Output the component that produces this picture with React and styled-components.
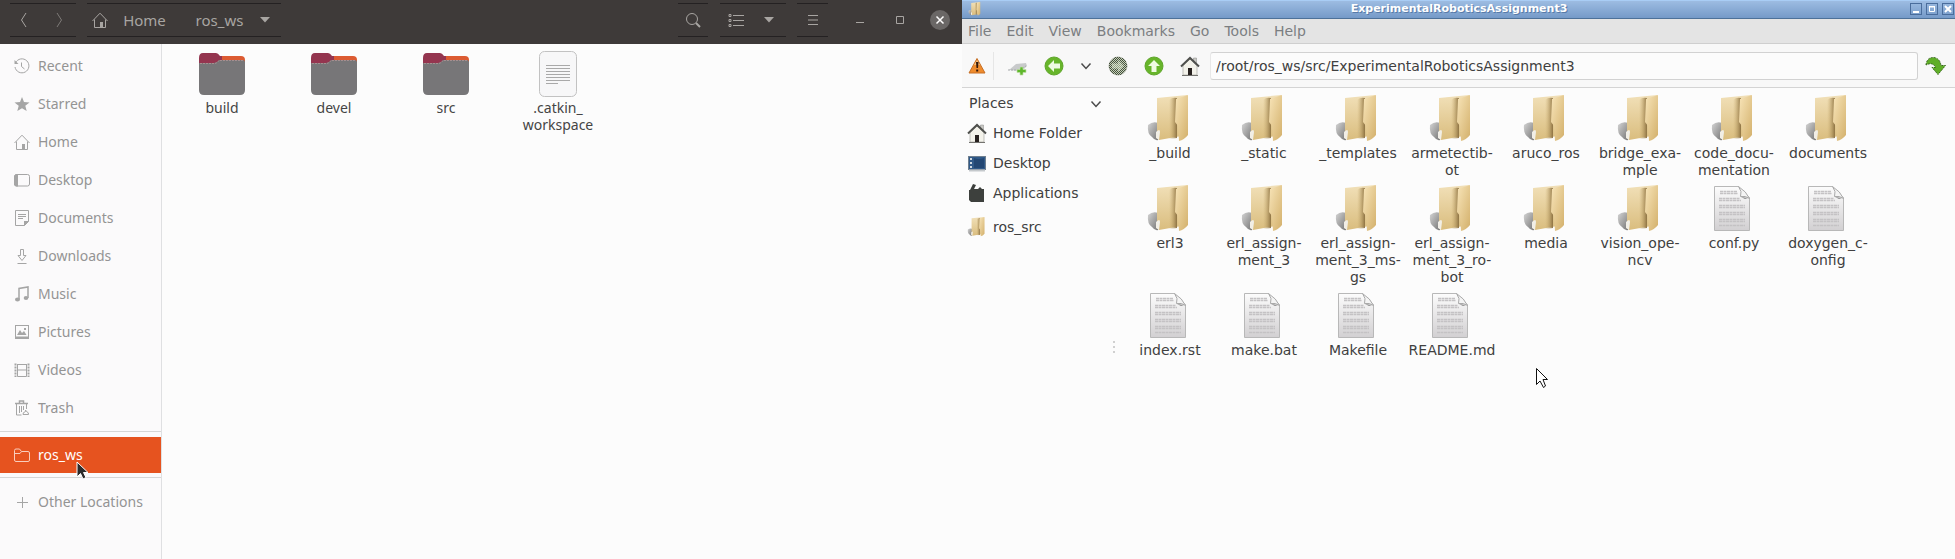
import React from "react";
import styled, { createGlobalStyle, css } from "styled-components";

const Global = createGlobalStyle`
  * { box-sizing: border-box; }
  body { margin: 0; background: #fcfcfc; }
  button { border: 0; padding: 0; margin: 0; background: none; font: inherit; color: inherit; }
  ul { list-style: none; margin: 0; padding: 0; }
  svg { display: block; flex: none; }
`;

const Desktop = styled.div`
  display: flex;
  min-height: 100vh;
`;

/* ---------- Nautilus window ---------- */

const Nautilus = styled.section`
  flex: 962 1 0;
  min-width: 0;
  display: flex;
  flex-direction: column;
  font: 14px/17px "Noto Sans", "Open Sans", sans-serif;
  color: #454545;
`;

const HeaderBar = styled.header`
  display: flex;
  align-items: center;
  height: 44px;
  padding: 0 12px 4px 10px;
  background: #3e3a39;
  color: #a8a5a2;
  font-size: 15px;
`;

const ButtonGroup = styled.div`
  display: flex;
  align-items: center;
  height: 34px;
  margin-right: ${(p) => p.$after || 0}px;
  border-top: 1px solid #242122;
  border-bottom: 1px solid #242122;
`;

const HeaderButton = styled.button`
  display: flex;
  align-items: center;
  justify-content: center;
  gap: ${(p) => p.$gap || 0}px;
  width: ${(p) => p.$width}px;
  height: 32px;
  opacity: ${(p) => (p.$dim ? 0.6 : 1)};
`;

const CrumbButton = styled(HeaderButton)`
  padding-left: 14px;
`;

const Spacer = styled.div`
  flex: 1;
`;

const CloseButton = styled.button`
  display: flex;
  align-items: center;
  justify-content: center;
  width: 20px;
  height: 20px;
  margin-left: 10px;
  border-radius: 50%;
  background: #6a6766;
  color: #fff;
`;

const NautilusBody = styled.div`
  flex: 1;
  display: flex;
`;

const SideBar = styled.nav`
  width: 162px;
  padding-top: 3px;
  border-right: 1px solid #dfe0e2;
  background: #fbfafb;
`;

const SideLink = styled.a`
  display: flex;
  align-items: center;
  gap: 8px;
  height: 38px;
  padding-left: 14px;
  color: #949494;
  text-decoration: none;
  white-space: nowrap;
  svg { color: #a5a5a5; }
  ${(p) =>
    p.$active &&
    css`
      height: 36px;
      background: #e6531f;
      color: #fff;
      svg { color: #f9cdbc; }
    `}
`;

const SideLabel = styled.span`
  padding-bottom: 2px;
`;

const Rule = styled.hr`
  margin: 4px 0 5px;
  border: 0;
  border-top: 1px solid #d6d6d6;
`;

const NautilusFiles = styled.ul`
  flex: 1;
  display: flex;
  align-items: flex-start;
  padding: 7px 0 0 4px;
`;

const NautilusFile = styled.li`
  display: flex;
  flex-direction: column;
  align-items: center;
  width: 112px;
  text-align: center;
`;

/* ---------- PCManFM window ---------- */

const PcManFm = styled.section`
  flex: 993 1 0;
  min-width: 0;
  display: flex;
  flex-direction: column;
  background: #fcfcfc;
  font: 14px/17px "DejaVu Sans", sans-serif;
  color: #404040;
`;

const TitleBar = styled.header`
  display: flex;
  align-items: center;
  height: 19px;
  padding: 0 1px 2px 6px;
  border-top: 1px solid #a9cdf5;
  border-bottom: 1px solid #4d7199;
  background: linear-gradient(#9dbce2, #759ac8);
`;

const Title = styled.h1`
  flex: 1;
  margin: 0;
  padding-left: 26px;
  font-size: 11px;
  line-height: 13px;
  text-align: center;
  color: #fff;
  text-shadow: 1px 1px 0 #587ba8;
`;

const TitleButtons = styled.div`
  display: flex;
  gap: 4px;
`;

const TitleButton = styled.button`
  width: 12px;
  height: 12px;
  border: 1px solid #4a6d9c;
  color: #fff;
`;

const MenuBar = styled.nav`
  display: flex;
  align-items: center;
  gap: 15px;
  height: 25px;
  padding-left: 6px;
  border-bottom: 1px solid #cfcfcf;
  background: #e4e4e4;
  color: #7b7e81;
`;

const ToolBar = styled.div`
  display: flex;
  align-items: center;
  height: 44px;
  padding: 0 8px 0 5px;
  border-bottom: 1px solid #d4d4d4;
  background: #f8f8f8;
`;

const ToolButton = styled.button`
  display: flex;
  align-items: center;
  justify-content: center;
  width: ${(p) => p.$width || 36}px;
  height: 36px;
`;

const ToolDivider = styled.span`
  width: 1px;
  height: 28px;
  margin: 0 6px;
  background: #e6e6e6;
`;

const PathInput = styled.input`
  flex: 1;
  min-width: 0;
  height: 28px;
  margin: 0 7px 0 2px;
  padding: 0 5px;
  border: 1px solid #d2d2d2;
  border-left-color: #e8e8e8;
  border-radius: 3px;
  background: #fcfcfc;
  color: inherit;
  font: inherit;
`;

const PcBody = styled.div`
  flex: 1;
  display: flex;
`;

const Places = styled.nav`
  width: 149px;
  padding: 7px 0 0 5px;
`;

const PlacesToggle = styled.button`
  display: flex;
  align-items: center;
  justify-content: space-between;
  width: 100%;
  height: 17px;
  padding: 0 9px 0 2px;
`;

const PlaceLink = styled.a`
  display: flex;
  align-items: center;
  gap: 6px;
  height: ${(p) => p.$height || 30}px;
  color: inherit;
  text-decoration: none;
`;

const PlaceList = styled.div`
  padding-top: 6px;
`;

const PaneHandle = styled.div`
  width: 5px;
  display: flex;
  flex-direction: column;
  align-items: center;
  justify-content: center;
  gap: 3px;
  padding-top: 46px;
`;

const Dot = styled.span`
  width: 2px;
  height: 2px;
  background: #d0d0d0;
`;

const IconGrid = styled.ul`
  flex: 1;
  display: grid;
  grid-template-columns: repeat(auto-fill, 94px);
  align-content: start;
  row-gap: 6px;
  padding: 7px 0 0 7px;
`;

const GridFile = styled.li`
  display: flex;
  flex-direction: column;
  align-items: center;
  gap: 2px;
  text-align: center;
  white-space: nowrap;
`;

const Pointer = styled.svg`
  position: absolute;
  left: ${(p) => p.$x}px;
  top: ${(p) => p.$y}px;
  pointer-events: none;
`;

/* ---------- drawings ---------- */

const Line = ({ size = 16, children, ...rest }) => (
  <svg width={size} height={size} viewBox="0 0 16 16" fill="none" stroke="currentColor" strokeWidth="1" {...rest}>
    {children}
  </svg>
);

const homeShape = (
  <>
    <path d="M.5 9 8 1.2 15.5 9M2.5 7.5v8h11v-8" />
    <path d="M8 10h3v5H8z" fill="currentColor" stroke="none" />
  </>
);

const sideIcons = {
  Recent: (
    <>
      <path d="M1.6 4.8A7 7 0 1 1 1 9" />
      <path d="M.5 2v4h4z" fill="currentColor" stroke="none" />
      <path d="M7.5 4.5v4l3 2.5" />
    </>
  ),
  Starred: <path d="m8 1 2 5 5.500.4-4.200 3.400 1.400 5.200L8 12.200 3.300 15l1.400-5.200L.5 6.400 6 6z" fill="currentColor" stroke="none" />,
  Home: homeShape,
  Desktop: (
    <>
      <rect x=".5" y="2.500" width="15" height="11.500" rx="2" />
      <path d="M2 2h2v12.500H2L0 13V4z" fill="currentColor" stroke="none" />
    </>
  ),
  Documents: (
    <>
      <path d="M1.500.5h13v11l-4 4h-9z" />
      <path d="M4 4.500h8M4 6.500h8M4 8.500h5" />
      <path d="M10 11h5l-5 5z" fill="currentColor" stroke="none" />
    </>
  ),
  Downloads: <path d="M6.500 1.500h3v6h2.500L8 12.500 4 7.500h2.500zM3.500 15.500h9" />,
  Music: (
    <>
      <path d="M5 13V2.500l9-1.500v11" strokeWidth="1.500" />
      <ellipse cx="3.500" cy="13.500" rx="2.500" ry="2" fill="currentColor" stroke="none" />
      <ellipse cx="12" cy="12" rx="2.300" ry="2" fill="currentColor" stroke="none" />
    </>
  ),
  Pictures: (
    <>
      <rect x="1.500" y="1.500" width="13" height="13" />
      <path d="M1 12.500h14V15H1zM3 11l3-5 2 3 2-2 2.500 4z" fill="currentColor" stroke="none" />
      <path d="M10 4h2v2h-2z" fill="currentColor" stroke="none" />
    </>
  ),
  Videos: (
    <>
      <path d="M3.500 2v12.500M12.500 2v12.500M3.500 2.500h9M3.500 8h9M3.500 14.500h9" />
      <path d="M1.500 1.500V15M14.500 1.500V15" strokeWidth="2" strokeDasharray="2 1" />
    </>
  ),
  Trash: (
    <>
      <path d="M1 3.500h13M5.500 3V1h4v2" strokeWidth="1.500" />
      <path d="M2.500 4v11h5M12.500 4v5M5.500 6v7M7.500 6v6M9.500 6v4" />
      <path d="M9 14.500h5.500q.500-2-2-3l-1-1.500v1.500q-3 1-2.500 3z" />
    </>
  ),
  ros_ws: <path d="M.5 13V3.500q0-1.500 1.500-1.500h3.500l2 2.500H14q1.500 0 1.500 1.500v7q0 1.500-1.500 1.500H2Q.5 14.500.5 13zM1 6.500h5l1.500-2" />,
  "Other Locations": <path d="M8.500 3v11M3 8.500h11" />,
};

const UbuntuFolder = () => (
  <svg width="46" height="48" viewBox="0 0 46 48">
    <path d="M8 5h34q4 0 4 4v12H8z" fill="#dc5b32" />
    <path d="M4 2h13q2 0 4 3h2v6l-8 5H0V7q0-5 4-5z" fill="#94354f" />
    <path d="M0 12h15q3 0 5-3h24q2 0 2 2v28q0 5-5 5H5q-5 0-5-5z" fill="#777678" />
    <path d="M1 12.500h14q3 0 5-3h24" fill="none" stroke="#a68f90" strokeDasharray="2 1" />
  </svg>
);

const UbuntuDoc = () => (
  <svg width="40" height="48" viewBox="0 0 40 48">
    <rect x="1.500" y=".5" width="37" height="45" rx="5" fill="#f7f7f8" stroke="#c2c2c2" />
    <path d="M8 14.500h24M8 17.500h24M8 20.500h24M8 23.500h24M8 26.500h24M8 29.500h24M8 32.500h12" stroke="#a9a9a9" />
  </svg>
);

const TanFolder = ({ size = 48 }) => (
  <svg width={size} height={size} viewBox="1 0 48 48">
    <defs>
      <linearGradient id="tanBack" x1="0" y1="0" x2="0" y2="1">
        <stop offset="0" stopColor="#f1e0b8" />
        <stop offset="1" stopColor="#dabd7e" />
      </linearGradient>
      <linearGradient id="tanFront" x1="0" y1="0" x2="1" y2="1">
        <stop offset="0" stopColor="#f8e5b9" />
        <stop offset="1" stopColor="#d3b06b" />
      </linearGradient>
      <linearGradient id="tanShade" x1="0" y1="0" x2="1" y2="0">
        <stop offset="0" stopColor="#c9ac6f" stopOpacity="0" />
        <stop offset="1" stopColor="#8d7242" />
      </linearGradient>
      <linearGradient id="tanShadow" x1="0" y1="0" x2="1" y2="1">
        <stop offset="0" stopColor="#d4d4d4" />
        <stop offset="1" stopColor="#777" />
      </linearGradient>
    </defs>
    <path d="M3 30q5-4 10-2v17q-3 1-6-3-5-3-4-12z" fill="url(#tanShadow)" />
    <path d="M12 3 42 0v40l-28 5-2-2z" fill="url(#tanBack)" />
    <path d="M24 5q3-3 8-2v40l-8 1z" fill="url(#tanShade)" />
    <path d="M31 4 43 0v40q-4 5-9 6l-1-15-3-4z" fill="url(#tanFront)" />
    <path d="M11 37q4-4 4 0l-1 8-3-2z" fill="#f1eee6" />
  </svg>
);

const TextPage = () => (
  <svg width="48" height="48" viewBox="1 0 48 48">
    <defs>
      <linearGradient id="page" x1="0" y1="0" x2="0" y2="1">
        <stop offset="0" stopColor="#fcfcfc" />
        <stop offset="1" stopColor="#d2d0d2" />
      </linearGradient>
    </defs>
    <path d="M5.500 1.500h24l11 11v33h-35z" fill="url(#page)" stroke="#b8b8b8" />
    <path d="M11 6.500h17M11 8.500h18M10 13.500h21M10 15.500h22M10 20.500h26M10 22.500h26M10 27.500h26M10 29.500h26M10 34.500h26M10 36.500h26M10 40.500h26" stroke="#c4c2c4" strokeWidth="1.500" strokeDasharray="3 .5" />
    <path d="M29.500 1.500q4 5 2 10 5-1 9 2-3-7-11-12z" fill="#f4f4f4" stroke="#a9a9a9" />
    <path d="m32 12 7 1-3 1z" fill="#8a8a8a" />
  </svg>
);

const TangoHome = () => (
  <svg width="20" height="20" viewBox="0 0 20 20">
    <path d="M13.500 2h3v6h-3z" fill="#c9c9c4" stroke="#888" strokeWidth=".5" />
    <path d="M3 9.500 10 3l7 6.500V19H3z" fill="#f3f2ea" stroke="#aaa9a3" strokeWidth=".7" />
    <path d="M1 10.500 10 2l9 8.500" fill="none" stroke="#4f504d" strokeWidth="2" />
    <path d="M8 12h4v7H8z" fill="#27211f" />
    <path d="M2 19.500h16" stroke="#73736f" />
  </svg>
);

const RoundArrow = ({ turn = 0, off }) => (
  <svg width="20" height="20" viewBox="0 0 20 20">
    <defs>
      <pattern id="check" width="2" height="2" patternUnits="userSpaceOnUse">
        <path d="M0 0h1v1H0zM1 1h1v1H1z" fill="#46503f" />
      </pattern>
    </defs>
    <circle cx="10" cy="10" r="9" fill={off ? "#c6d3b8" : "#67b52a"} stroke={off ? "#a9b0a2" : "#5fa62b"} />
    {off && <circle cx="10" cy="10" r="9" fill="url(#check)" shapeRendering="crispEdges" />}
    <path
      d="M4 10l6-6v3.500h6v5h-6V16z"
      fill="#effbe2"
      opacity={off ? 0.45 : 1}
      transform={`rotate(${turn} 10 10)`}
    />
  </svg>
);

const Chevron = () => (
  <svg width="12" height="12" viewBox="0 0 12 12" fill="none" stroke="#4b4b4b" strokeWidth="1.500">
    <path d="m1.500 3.500 4.500 5 4.500-5" />
  </svg>
);

const Caret = () => (
  <svg width="10" height="6" viewBox="0 0 10 6">
    <path d="M0 0h10L5 5.500z" fill="currentColor" />
  </svg>
);

const Warning = () => (
  <svg width="18" height="18" viewBox="0 0 18 18">
    <path d="M9 1.500 17 16H1z" fill="#ef8b2c" stroke="#c66f25" strokeLinejoin="round" />
    <path d="M9 3 12 8H6z" fill="#f7c07c" />
    <path d="M8 5h2.500L10 11H8.500zM8.200 12.500h2v2h-2z" fill="#33170a" />
  </svg>
);

const NewTab = () => (
  <svg width="22" height="20" viewBox="0 0 22 20">
    <path d="M2 14 9 8l10-1 1 3-5 5z" fill="#c8cacb" />
    <path d="M1 14h11l7-4" stroke="#a6a9ab" fill="none" strokeDasharray="2 1" />
    <path d="M13 11h3v2.500h3v3h-3V19h-3v-2.500h-3v-3h3z" fill="#5fb72b" stroke="#c0dea9" strokeWidth=".7" />
  </svg>
);

const GoArrow = () => (
  <svg width="22" height="20" viewBox="0 0 22 20">
    <path d="M1 9Q2 1 9 1.500q6 1 7 8h4.500L13 18.500l-6-7h3.500Q8 5.500 1 9z" fill="#5fae27" stroke="#37651d" strokeDasharray="2 1" />
  </svg>
);

const DesktopScreen = () => (
  <svg width="20" height="20" viewBox="0 0 20 20">
    <rect x="1.500" y="3.500" width="17" height="13" fill="#315a89" stroke="#6f7f8f" />
    <path d="M7 5q5 2 10 0v10H7z" fill="#234773" />
    <path d="M3 5h2v2H3zM3 9h2v2H3zM3 13h2v2H3z" fill="#d1d9e0" />
    <path d="M2 17.500h16" stroke="#c5c9cc" strokeWidth="2" />
  </svg>
);

const Apps = () => (
  <svg width="20" height="20" viewBox="0 0 20 20">
    <path d="M2 7h1l3-6 3 1-2 4h4l2-2 2 2h2v13H4l-2-2z" fill="#3d403d" />
  </svg>
);

/* ---------- content ---------- */

const sidePlaces = ["Recent", "Starred", "Home", "Desktop", "Documents", "Downloads", "Music", "Pictures", "Videos", "Trash"];

const projectFiles = [
  ["_build"], ["_static"], ["_templates"], ["armetectib-", "ot"], ["aruco_ros"], ["bridge_exa-", "mple"],
  ["code_docu-", "mentation"], ["documents"], ["erl3"], ["erl_assign-", "ment_3"],
  ["erl_assign-", "ment_3_ms-", "gs"], ["erl_assign-", "ment_3_ro-", "bot"], ["media"], ["vision_ope-", "ncv"],
  ["conf.py"], ["doxygen_c-", "onfig"], ["index.rst"], ["make.bat"], ["Makefile"], ["README.md"],
];
const pages = new Set(["conf.py", "doxygen_c-", "index.rst", "make.bat", "Makefile", "README.md"]);

const Lines = ({ of }) => (
  <span>
    {of.map((t, i) => (
      <React.Fragment key={i}>
        {i > 0 && <br />}
        {t}
      </React.Fragment>
    ))}
  </span>
);

const SideItem = ({ name, active }) => (
  <SideLink href="#" $active={active}>
    <Line>{sideIcons[name]}</Line>
    <SideLabel>{name}</SideLabel>
  </SideLink>
);

function NautilusWindow() {
  return (
    <Nautilus>
      <HeaderBar>
        <ButtonGroup $after={11}>
          <HeaderButton $width={28} aria-label="Back">
            <Line><path d="M10 1 5.500 8l4.500 7" /></Line>
          </HeaderButton>
          <HeaderButton $width={38} $dim aria-label="Forward">
            <Line><path d="m8 1 4.500 7L8 15" /></Line>
          </HeaderButton>
        </ButtonGroup>
        <ButtonGroup>
          <HeaderButton $width={84} $gap={15}>
            <Line>{homeShape}</Line>Home
          </HeaderButton>
          <CrumbButton $width={110} $gap={17}>
            ros_ws<Caret />
          </CrumbButton>
        </ButtonGroup>
        <Spacer />
        <ButtonGroup $after={12}>
          <HeaderButton $width={30} aria-label="Search">
            <Line><circle cx="7" cy="7" r="5.500" /><path d="m11 11 4 4" strokeWidth="2" /></Line>
          </HeaderButton>
        </ButtonGroup>
        <ButtonGroup $after={11}>
          <HeaderButton $width={32} aria-label="List view">
            <Line><path d="M5 3.500h11M5 8.500h11M5 13.500h11" /><path d="M1 2.500h2v2H1zM1 7.500h2v2H1zM1 12.500h2v2H1z" /></Line>
          </HeaderButton>
          <HeaderButton $width={34} aria-label="View options"><Caret /></HeaderButton>
        </ButtonGroup>
        <ButtonGroup $after={12}>
          <HeaderButton $width={31} aria-label="Menu">
            <Line><path d="M3 3.500h10M3 8h10M3 12.500h10" /></Line>
          </HeaderButton>
        </ButtonGroup>
        <HeaderButton $width={40} aria-label="Minimize">
          <Line><path d="M4 10.500h8" /></Line>
        </HeaderButton>
        <HeaderButton $width={40} aria-label="Maximize">
          <Line><path d="M4.500 4.500h7v7h-7z" /></Line>
        </HeaderButton>
        <CloseButton aria-label="Close">
          <Line size={16}><path d="m4.500 4.500 7 7m0-7-7 7" strokeWidth="1.500" /></Line>
        </CloseButton>
      </HeaderBar>
      <NautilusBody>
        <SideBar>
          {sidePlaces.map((n) => <SideItem key={n} name={n} />)}
          <Rule />
          <SideItem name="ros_ws" active />
          <Rule />
          <SideItem name="Other Locations" />
        </SideBar>
        <NautilusFiles>
          {["build", "devel", "src"].map((n) => (
            <NautilusFile key={n}><UbuntuFolder />{n}</NautilusFile>
          ))}
          <NautilusFile><UbuntuDoc /><Lines of={[".catkin_", "workspace"]} /></NautilusFile>
        </NautilusFiles>
      </NautilusBody>
    </Nautilus>
  );
}

function PcManFmWindow() {
  return (
    <PcManFm>
      <TitleBar>
        <TanFolder size={14} />
        <Title>ExperimentalRoboticsAssignment3</Title>
        <TitleButtons>
          <TitleButton aria-label="Minimize">
            <svg width="10" height="10"><path d="M2 7h6v2H2z" fill="#fff" /></svg>
          </TitleButton>
          <TitleButton aria-label="Maximize">
            <svg width="10" height="10"><path d="M2.500 3h5v4.500h-5zM2 2.500h6" fill="none" stroke="#fff" /></svg>
          </TitleButton>
          <TitleButton aria-label="Close">
            <svg width="10" height="10"><path d="m2 2 6 6m0-6L2 8" stroke="#fff" strokeWidth="2" /></svg>
          </TitleButton>
        </TitleButtons>
      </TitleBar>
      <MenuBar>
        {["File", "Edit", "View", "Bookmarks", "Go", "Tools", "Help"].map((m) => <button key={m}>{m}</button>)}
      </MenuBar>
      <ToolBar>
        <ToolButton $width={20} aria-label="Root warning"><Warning /></ToolButton>
        <ToolDivider />
        <ToolButton aria-label="New tab"><NewTab /></ToolButton>
        <ToolButton aria-label="Back"><RoundArrow /></ToolButton>
        <ToolButton $width={28} aria-label="History"><Chevron /></ToolButton>
        <ToolButton aria-label="Forward"><RoundArrow turn={180} off /></ToolButton>
        <ToolButton aria-label="Up"><RoundArrow turn={90} /></ToolButton>
        <ToolButton aria-label="Home"><TangoHome /></ToolButton>
        <PathInput aria-label="Location" defaultValue="/root/ros_ws/src/ExperimentalRoboticsAssignment3" />
        <ToolButton $width={22} aria-label="Go"><GoArrow /></ToolButton>
      </ToolBar>
      <PcBody>
        <Places>
          <PlacesToggle>Places<Chevron /></PlacesToggle>
          <PlaceList>
            <PlaceLink href="#"><TangoHome />Home Folder</PlaceLink>
            <PlaceLink href="#"><DesktopScreen />Desktop</PlaceLink>
            <PlaceLink href="#"><Apps />Applications</PlaceLink>
            <PlaceLink href="#" $height={38}><TanFolder size={20} />ros_src</PlaceLink>
          </PlaceList>
        </Places>
        <PaneHandle><Dot /><Dot /><Dot /></PaneHandle>
        <IconGrid>
          {projectFiles.map((f) => (
            <GridFile key={f.join("")}>
              {pages.has(f[0]) ? <TextPage /> : <TanFolder />}
              <Lines of={f} />
            </GridFile>
          ))}
        </IconGrid>
      </PcBody>
    </PcManFm>
  );
}

export default function App() {
  return (
    <>
      <Global />
      <Desktop>
        <NautilusWindow />
        <PcManFmWindow />
      </Desktop>
      <Pointer $x={76} $y={461} width="14" height="20" viewBox="0 0 14 20">
        <path d="M1 1v15l3.500-3.500L7 18l3-1.500L7.500 11.500H12z" fill="#2b2b2b" stroke="#fff" />
      </Pointer>
      <Pointer $x={1535} $y={367} width="14" height="22" viewBox="0 0 14 22">
        <path d="M1.500 1.500v16L5 14l3.500 6.500 2-1.500L8 12.500h4.500z" fill="#fff" stroke="#111" />
      </Pointer>
    </>
  );
}
